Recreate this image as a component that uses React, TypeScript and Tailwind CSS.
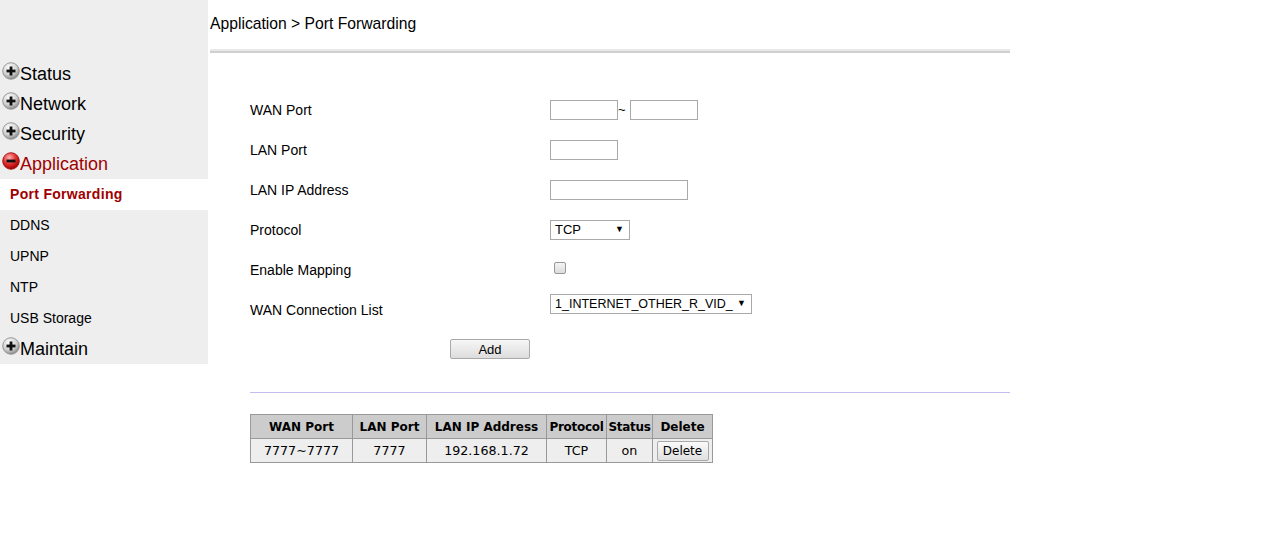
import { useState } from 'react'

type MenuIconProps = { open?: boolean }

// round bevelled +/- button used in front of the top level menu entries
function MenuIcon({ open }: MenuIconProps) {
  const id = open ? 'minusGrad' : 'plusGrad'
  return (
    <svg width="18" height="18" viewBox="0 0 18 18" className="shrink-0">
      <defs>
        <radialGradient id={id} cx="40%" cy="30%" r="70%">
          {open ? (
            <>
              <stop offset="0%" stopColor="#ffb0b0" />
              <stop offset="55%" stopColor="#e03030" />
              <stop offset="100%" stopColor="#a00000" />
            </>
          ) : (
            <>
              <stop offset="0%" stopColor="#ffffff" />
              <stop offset="60%" stopColor="#d4d4d4" />
              <stop offset="100%" stopColor="#8a8a8a" />
            </>
          )}
        </radialGradient>
      </defs>
      <circle cx="9" cy="9" r="8.3" fill={`url(#${id})`} stroke={open ? '#900' : '#888'} strokeWidth="0.8" />
      <rect x="4.5" y="7.6" width="9" height="2.8" fill="#111" />
      {!open && <rect x="7.6" y="4.5" width="2.8" height="9" fill="#111" />}
    </svg>
  )
}

const subItems = ['Port Forwarding', 'DDNS', 'UPNP', 'NTP', 'USB Storage']

function Sidebar() {
  const top = (label: string, open = false) => (
    <div className="flex h-[30px] items-end pb-[2px]">
      <span className="mb-[4px] flex items-center pl-[2px]"><MenuIcon open={open} /></span>
      <span className={`text-[18px] leading-[20px] ${open ? 'text-[#a00000]' : 'text-black'}`}>{label}</span>
    </div>
  )
  return (
    <div className="w-[208px] shrink-0 self-start bg-[#eeeeee] pt-[56px] pb-[3px]">
      {top('Status')}
      {top('Network')}
      {top('Security')}
      {top('Application', true)}
      <div className="h-[3px]" />
      {subItems.map((s, i) => (
        <div
          key={s}
          className={`flex h-[31px] items-center pl-[10px] text-[14px] ${i === 0 ? 'bg-white font-bold tracking-[0.3px] text-[#a00000]' : 'text-black'}`}
        >
          {s}
        </div>
      ))}
      <div className="-mt-[3px]">{top('Maintain')}</div>
    </div>
  )
}

const inputCls = 'h-[20px] border border-[#a9a9a9] bg-white px-1 text-[13px] outline-none'

function Row({ label, children }: { label: string; children: React.ReactNode }) {
  return (
    <div className="flex h-[40px] items-center">
      <div className="w-[300px] text-[14px]">{label}</div>
      <div className="flex items-center">{children}</div>
    </div>
  )
}

const cell = 'border border-[#999999] text-center'

export default function App() {
  const [mapping, setMapping] = useState(false)
  return (
    <div className="flex min-h-[536px] w-[1279px] bg-white font-['Liberation_Sans',Arial,sans-serif] text-black">
      <Sidebar />
      <div className="ml-[2px] w-[800px]">
        <div className="pt-[14px] text-[15.7px] leading-[20px]">Application &gt; Port Forwarding</div>
        <div className="mt-[15px] h-[4px] border-b-[2px] border-[#cfcfcf] bg-[#e8e8e8]" />

        <div className="pl-[40px] pt-[37px]">
          <Row label="WAN Port">
            <input className={`${inputCls} w-[68px]`} />
            <span className="w-[12px] text-[13px]">~</span>
            <input className={`${inputCls} w-[68px]`} />
          </Row>
          <Row label="LAN Port">
            <input className={`${inputCls} w-[68px]`} />
          </Row>
          <Row label="LAN IP Address">
            <input className={`${inputCls} w-[138px]`} />
          </Row>
          <Row label="Protocol">
            <div className="flex h-[20px] w-[80px] items-center justify-between border border-[#a9a9a9] pl-[4px] pr-[5px] text-[13px]">
              <span>TCP</span>
              <span className="text-[9px]">▼</span>
            </div>
          </Row>
          <Row label="Enable Mapping">
            <button
              onClick={() => setMapping((v) => !v)}
              className={`-mt-[4px] ml-[4px] h-[12px] w-[12px] rounded-[2px] border border-[#999] ${mapping ? 'bg-[#9ab]' : 'bg-gradient-to-b from-[#f4f4f4] to-[#dcdcdc]'}`}
            />
          </Row>
          <Row label="WAN Connection List">
            <div className="-mt-[12px] flex h-[20px] w-[202px] items-center justify-between border border-[#a9a9a9] pl-[4px] pr-[5px] text-[12.5px]">
              <span>1_INTERNET_OTHER_R_VID_</span>
              <span className="text-[9px]">▼</span>
            </div>
          </Row>
          <div className="pl-[200px] pt-[7px]">
            <button className="h-[20px] w-[80px] rounded-[2px] border border-[#a9a9a9] bg-gradient-to-b from-[#f6f6f6] to-[#dddddd] text-[13px]">
              Add
            </button>
          </div>
          <div className="mt-[31px] h-px w-[760px] bg-[#c4bcec]" />

          <table className="mt-[21px] table-fixed border-collapse font-['DejaVu_Sans',sans-serif] text-[12px]">
            <thead>
              <tr className="h-[24px] bg-[#cccccc] font-bold">
                <td className={`${cell} w-[102px]`}>WAN Port</td>
                <td className={`${cell} w-[74px]`}>LAN Port</td>
                <td className={`${cell} w-[120px]`}>LAN IP Address</td>
                <td className={`${cell} w-[60px] tracking-[-0.3px]`}>Protocol</td>
                <td className={`${cell} w-[46px] tracking-[-0.3px]`}>Status</td>
                <td className={`${cell} w-[60px]`}>Delete</td>
              </tr>
            </thead>
            <tbody className="text-[12.7px]">
              <tr className="h-[24px] bg-[#eeeeee]">
                <td className={cell}>7777~7777</td>
                <td className={cell}>7777</td>
                <td className={cell}>192.168.1.72</td>
                <td className={cell}>TCP</td>
                <td className={cell}>on</td>
                <td className={`${cell} px-[3px]`}>
                  <button className="h-[20px] w-[52px] rounded-[2px] border border-[#a9a9a9] bg-gradient-to-b from-[#fafafa] to-[#e0e0e0] text-[12px]">
                    Delete
                  </button>
                </td>
              </tr>
            </tbody>
          </table>
        </div>
      </div>
    </div>
  )
}
